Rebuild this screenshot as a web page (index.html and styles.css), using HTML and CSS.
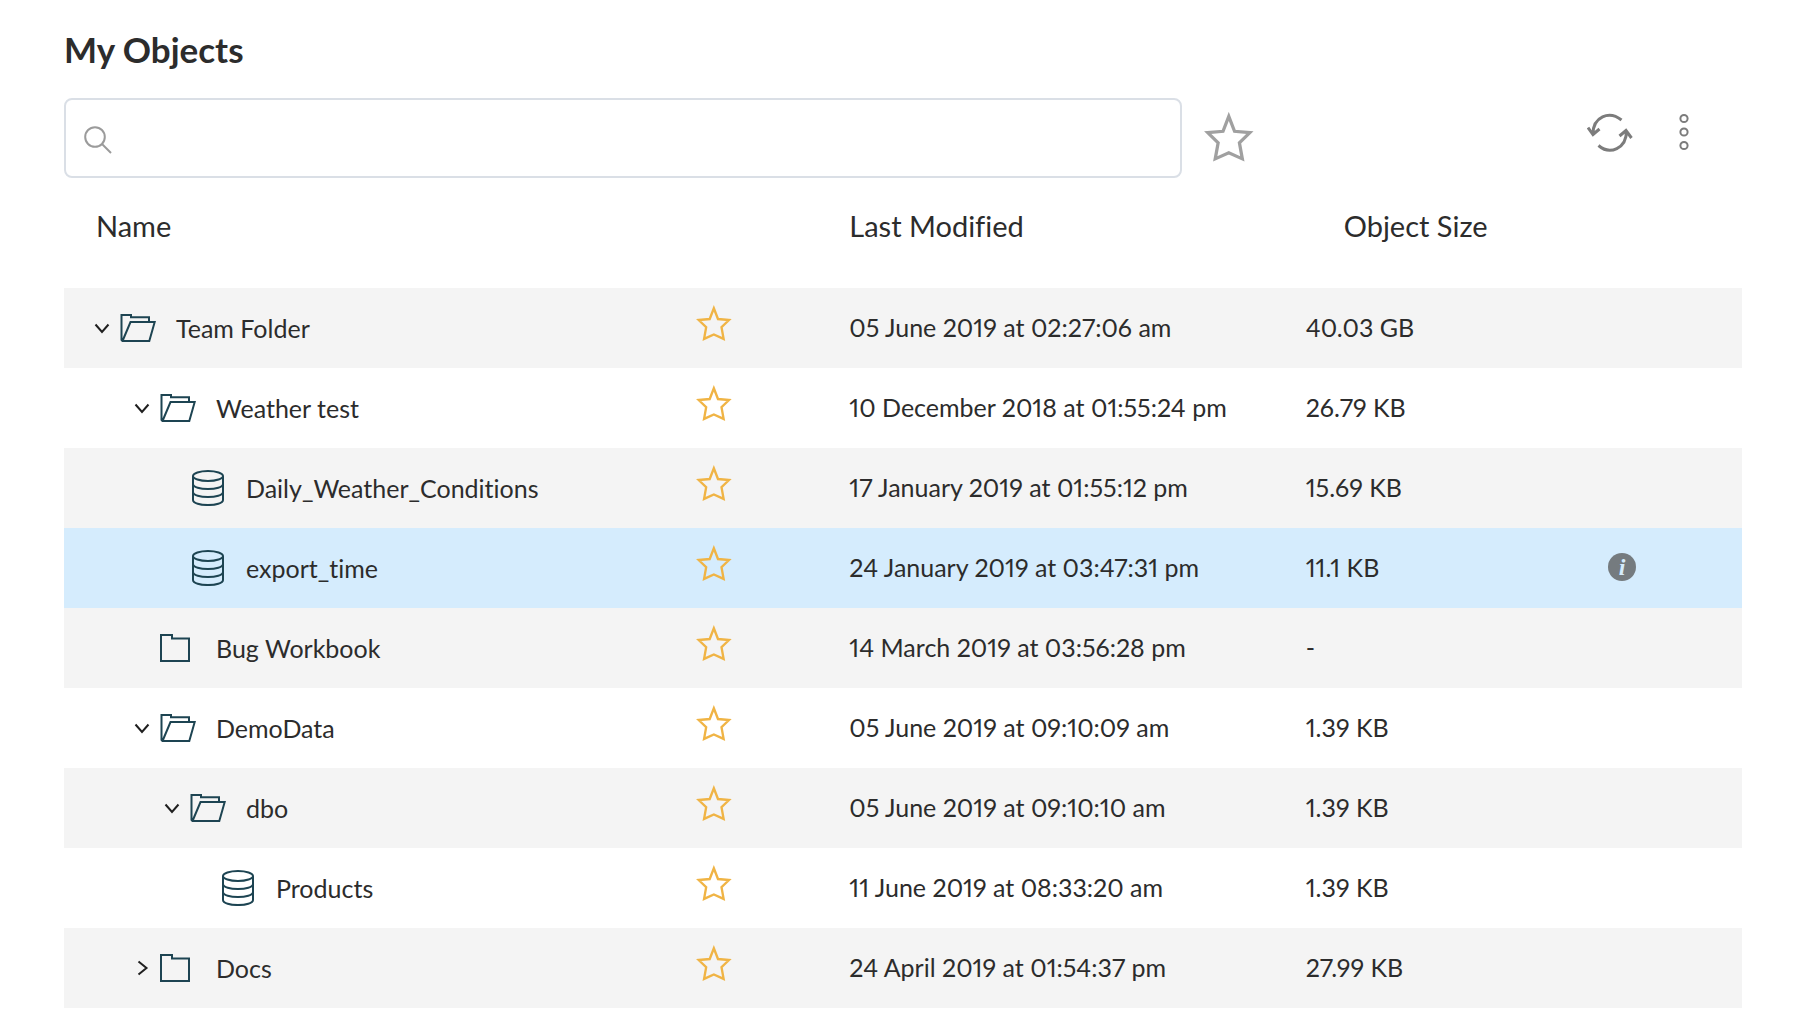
FILE: index.html
```html
<!DOCTYPE html>
<html lang="en">
<head>
<meta charset="utf-8">
<meta name="viewport" content="width=device-width, initial-scale=1">
<title>My Objects</title>
<link rel="stylesheet" href="styles.css">
</head>
<body>
<svg class="sprite" aria-hidden="true">
  <symbol id="star" viewBox="0 0 46 47"><path d="M22.8 4L28.1 17.8L42.2 19L32.6 28.3L35.3 43.2L22.8 37.6L10.3 43.2L13 28.3L3.4 19L17.5 17.8Z"/></symbol>
  <symbol id="open" viewBox="0 0 36 28"><path d="M1.5 26.5V1H11V3.2H29V8M2.5 27L10.5 8H34.7L29.3 27H2.5L1.5 26"/></symbol>
  <symbol id="folder" viewBox="0 0 36 28"><path d="M1 1H12V4.5H29V27H1Z"/></symbol>
  <symbol id="data" viewBox="0 0 36 36"><ellipse cx="18" cy="6" rx="15" ry="5"/><path d="M3 6V30C3 36.7 33 36.7 33 30V6M3 14C3 20.7 33 20.7 33 14M3 22C3 28.7 33 28.7 33 22"/></symbol>
  <symbol id="down" viewBox="0 0 16 16"><path d="M1.5 4.500L8 12L14.5 4.500"/></symbol>
  <symbol id="right" viewBox="0 0 16 16"><path d="M4.500 1.5L12.500 8L4.500 14.5"/></symbol>
</svg>
<main class="page">
  <h1 class="title">My Objects</h1>
  <div class="toolbar">
    <div class="search">
      <svg class="search-icon" viewBox="0 0 28 28" aria-hidden="true"><circle cx="11" cy="11" r="9.8"/><path d="M18 18L27 27"/></svg>
      <input class="search-input" type="search" aria-label="Search objects">
    </div>
    <button class="icon-button" type="button" aria-label="Favourites"><svg class="star-large"><use href="#star"/></svg></button>
    <div class="actions">
      <button class="icon-button" type="button" aria-label="Refresh"><svg class="refresh" viewBox="0 0 46 40"><path d="M34.500 7C22-3 6 4 6 21M1 14.500L6 21.500L12.500 16M11.500 32.500C23 42.500 39.500 35.500 39.500 18M32.500 23L39 17.500L44.500 25"/></svg></button>
      <button class="icon-button" type="button" aria-label="More options"><svg class="more" viewBox="0 0 10 40"><circle cx="5" cy="5.500" r="3.600"/><circle cx="5" cy="19" r="3.600"/><circle cx="5" cy="32.500" r="3.600"/></svg></button>
    </div>
  </div>
  <table class="objects">
    <colgroup><col class="col-name"><col class="col-star"><col class="col-date"><col class="col-size"><col></colgroup>
    <thead><tr><th class="head-name" scope="col">Name</th><td></td><th scope="col">Last Modified</th><th class="head-size" scope="col">Object Size</th><td></td></tr></thead>
    <tbody>
      <tr class="shade"><td><div class="name"><button class="toggle" type="button" aria-label="Collapse Team Folder"><svg><use href="#down"/></svg></button><svg class="kind"><use href="#open"/></svg><span>Team Folder</span></div></td><td><button class="favourite" type="button" aria-label="Favourite Team Folder"><svg><use href="#star"/></svg></button></td><td>05 June 2019 at 02:27:06 am</td><td>40.03 GB</td><td></td></tr>
      <tr><td><div class="name level-1"><button class="toggle" type="button" aria-label="Collapse Weather test"><svg><use href="#down"/></svg></button><svg class="kind"><use href="#open"/></svg><span>Weather test</span></div></td><td><button class="favourite" type="button" aria-label="Favourite Weather test"><svg><use href="#star"/></svg></button></td><td>10 December 2018 at 01:55:24 pm</td><td>26.79 KB</td><td></td></tr>
      <tr class="shade"><td><div class="name level-2 leaf"><svg class="kind"><use href="#data"/></svg><span>Daily_Weather_Conditions</span></div></td><td><button class="favourite" type="button" aria-label="Favourite Daily_Weather_Conditions"><svg><use href="#star"/></svg></button></td><td>17 January 2019 at 01:55:12 pm</td><td>15.69 KB</td><td></td></tr>
      <tr class="selected"><td><div class="name level-2 leaf"><svg class="kind"><use href="#data"/></svg><span>export_time</span></div></td><td><button class="favourite" type="button" aria-label="Favourite export_time"><svg><use href="#star"/></svg></button></td><td>24 January 2019 at 03:47:31 pm</td><td>11.1 KB</td><td><button class="info" type="button" aria-label="Information">i</button></td></tr>
      <tr class="shade"><td><div class="name level-1 leaf"><svg class="kind"><use href="#folder"/></svg><span>Bug Workbook</span></div></td><td><button class="favourite" type="button" aria-label="Favourite Bug Workbook"><svg><use href="#star"/></svg></button></td><td>14 March 2019 at 03:56:28 pm</td><td>-</td><td></td></tr>
      <tr><td><div class="name level-1"><button class="toggle" type="button" aria-label="Collapse DemoData"><svg><use href="#down"/></svg></button><svg class="kind"><use href="#open"/></svg><span>DemoData</span></div></td><td><button class="favourite" type="button" aria-label="Favourite DemoData"><svg><use href="#star"/></svg></button></td><td>05 June 2019 at 09:10:09 am</td><td>1.39 KB</td><td></td></tr>
      <tr class="shade"><td><div class="name level-2"><button class="toggle" type="button" aria-label="Collapse dbo"><svg><use href="#down"/></svg></button><svg class="kind"><use href="#open"/></svg><span>dbo</span></div></td><td><button class="favourite" type="button" aria-label="Favourite dbo"><svg><use href="#star"/></svg></button></td><td>05 June 2019 at 09:10:10 am</td><td>1.39 KB</td><td></td></tr>
      <tr><td><div class="name level-3 leaf"><svg class="kind"><use href="#data"/></svg><span>Products</span></div></td><td><button class="favourite" type="button" aria-label="Favourite Products"><svg><use href="#star"/></svg></button></td><td>11 June 2019 at 08:33:20 am</td><td>1.39 KB</td><td></td></tr>
      <tr class="shade"><td><div class="name level-1"><button class="toggle" type="button" aria-label="Expand Docs"><svg><use href="#right"/></svg></button><svg class="kind"><use href="#folder"/></svg><span>Docs</span></div></td><td><button class="favourite" type="button" aria-label="Favourite Docs"><svg><use href="#star"/></svg></button></td><td>24 April 2019 at 01:54:37 pm</td><td>27.99 KB</td><td></td></tr>
    </tbody>
  </table>
</main>
</body>
</html>
```
FILE: styles.css
```css
* { box-sizing: border-box; }
body { margin: 0; background: #fff; color: #2c2c2c; font-family: Lato, sans-serif; font-size: 25px; line-height: 32px; font-variant-ligatures: none; font-variant-numeric: proportional-nums; }
button { padding: 0; border: 0; background: none; color: inherit; font: inherit; cursor: pointer; }
svg { display: block; fill: none; stroke: currentColor; stroke-width: 2px; }
.sprite { position: absolute; width: 0; height: 0; }
.page { padding: 29px 62px 4px 64px; }
.title { margin: 0 0 29px; font-size: 35px; line-height: 40px; font-weight: 700; }

.toolbar { display: flex; align-items: center; height: 80px; }
.search { position: relative; flex: 0 1 1118px; height: 80px; }
.search-icon { position: absolute; left: 20px; top: 28px; width: 28px; height: 28px; color: #9b9b9b; }
.search-input { width: 100%; height: 100%; padding: 0 20px 0 64px; border: 2px solid #dadfe6; border-radius: 8px; background: none; color: inherit; font: inherit; }
.icon-button { color: #7c7c7c; }
.star-large { width: 50px; height: 51px; margin: 0 0 2px 22px; color: #a0a0a0; stroke-width: 3px; }
.actions { display: flex; align-items: center; gap: 46px; margin: 0 53px 10px auto; }
.refresh { width: 46px; height: 40px; stroke-width: 3px; }
.more { width: 10px; height: 40px; }

.objects { width: 100%; border-collapse: collapse; table-layout: fixed; }
.col-name { width: 36.8%; }
.col-star { width: 10%; }
.col-date { width: 27.2%; }
.col-size { width: 17.9%; }
th, td { padding: 0; text-align: left; white-space: nowrap; }
thead tr { height: 110px; }
th { padding-bottom: 14px; font-size: 29px; font-weight: 400; }
.head-name { padding-left: 32px; }
.head-size { padding-left: 38px; }
tbody tr { height: 80px; }
tbody td { padding-bottom: 3px; }
tbody td:first-child { padding-bottom: 0; }
.shade { background: #f4f4f4; }
.selected { background: #d5ecfd; }

.name { display: flex; align-items: center; padding-left: 30px; }
.leaf::before { content: ""; width: 26px; }
.level-1 { padding-left: 70px; }
.level-2 { padding-left: 100px; }
.level-3 { padding-left: 130px; }
.toggle { margin-right: 10px; color: #1f1f1f; }
.toggle svg { width: 16px; height: 16px; }
.kind { width: 36px; height: 36px; margin-right: 20px; color: #1d4452; }
.favourite { display: block; margin-left: 14px; padding-bottom: 6px; color: #f0b445; }
.favourite svg { width: 36px; height: 37px; stroke-width: 3px; }
.info { display: block; width: 28px; height: 28px; margin-left: 2px; border-radius: 50%; background: #757b7f; color: #d5ecfd; font: italic 700 24px/26px "Liberation Serif", serif; text-align: center; }
```
